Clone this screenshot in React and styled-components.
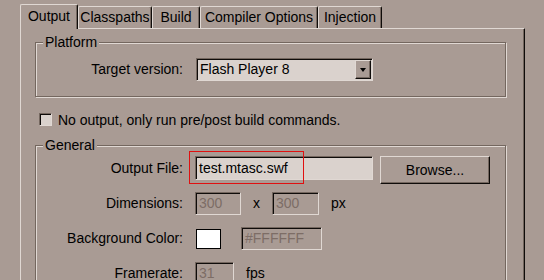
import React from 'react';
import styled, { createGlobalStyle } from 'styled-components';

const C = {
  face: '#A99B94',
  field: '#DAD2CD',
  hi: '#E0D8D3',
  shadow: '#74675F',
  dark: '#0F0C0A',
  dis: '#7D6D66',
};

const Global = createGlobalStyle`
  html, body { margin: 0; padding: 0; background: ${C.face}; }
  body {
    font-family: "Liberation Sans", Arial, sans-serif;
    font-size: 14px;
    color: #000;
    overflow: hidden;
  }
  * { box-sizing: border-box; }
`;

const Window = styled.div`
  position: relative;
  width: 544px;
  height: 280px;
  padding: 4px 0 0 20px;
  overflow: hidden;
`;

const TabStrip = styled.div`
  display: flex;
  align-items: flex-end;
  height: 24px;
`;

const Tab = styled.div`
  position: relative;
  z-index: ${(p) => (p.$active ? 2 : 0)};
  width: ${(p) => p.$w}px;
  height: ${(p) => (p.$active ? 25 : 22)}px;
  margin-bottom: ${(p) => (p.$active ? -1 : 0)}px;
  padding-top: ${(p) => (p.$active ? 4 : 3)}px;
  background: ${C.face};
  border-top: 1px solid ${C.hi};
  border-left: 1px solid ${C.hi};
  border-right: 1px solid ${C.dark};
  border-radius: 2px 2px 0 0;
  box-shadow: inset -1px 0 0 ${C.shadow};
  display: flex;
  justify-content: center;
  line-height: 15px;
  white-space: nowrap;
`;

const Panel = styled.div`
  width: 505px;
  height: 260px;
  border-top: 1px solid ${C.hi};
  border-left: 1px solid ${C.hi};
  border-right: 1px solid ${C.dark};
  box-shadow: inset -1px 0 0 ${C.shadow};
  padding: 0 18px 0 14px;
  display: flex;
  flex-direction: column;
`;

const Group = styled.fieldset`
  margin: ${(p) => p.$mt}px 0 0 0;
  padding: ${(p) => p.$pt}px 0 ${(p) => p.$pb}px 7px;
  border: 1px solid ${C.shadow};
  box-shadow: inset 1px 1px 0 ${C.hi}, 1px 1px 0 ${C.hi};
  min-width: 0;
  display: flex;
  flex-direction: column;
`;

const Legend = styled.legend`
  padding: 0 2px;
  background: ${C.face};
  line-height: 14px;
`;

const Row = styled.div`
  display: flex;
  align-items: flex-start;
  gap: ${(p) => p.$gap || 12}px;
  margin-top: ${(p) => p.$mt || 0}px;
`;

const Label = styled.div`
  width: 140px;
  flex: none;
  text-align: right;
  line-height: ${(p) => p.$h}px;
  white-space: nowrap;
`;

const Unit = styled.div`
  line-height: ${(p) => p.$h}px;
  white-space: nowrap;
`;

const sunken = `
  border: 1px solid;
  border-color: ${C.shadow} ${C.hi} ${C.hi} ${C.shadow};
  box-shadow: inset 1px 1px 0 ${C.dark};
`;

const Field = styled.div`
  ${sunken}
  width: ${(p) => p.$w}px;
  height: ${(p) => p.$h}px;
  background: ${(p) => (p.$disabled ? C.face : C.field)};
  color: ${(p) => (p.$disabled ? C.dis : '#000')};
  padding: 0 0 0 3px;
  line-height: ${(p) => p.$h - 2}px;
  white-space: nowrap;
  overflow: hidden;
`;

const Combo = styled.div`
  ${sunken}
  width: 177px;
  height: 23px;
  background: ${C.field};
  display: flex;
  align-items: center;
  justify-content: space-between;
  padding: 1px 1px 1px 3px;
  line-height: 19px;
`;

const DropButton = styled.div`
  width: 16px;
  height: 19px;
  background: ${C.face};
  border: 1px solid;
  border-color: ${C.hi} ${C.dark} ${C.dark} ${C.hi};
  box-shadow: inset -1px -1px 0 ${C.shadow};
  display: flex;
  align-items: center;
  justify-content: center;
`;

const Arrow = styled.div`
  width: 0;
  height: 0;
  border-left: 3.5px solid transparent;
  border-right: 3.5px solid transparent;
  border-top: 4px solid #000;
  margin-right: 1px;
`;

const CheckRow = styled.div`
  display: flex;
  align-items: center;
  gap: 6px;
  margin: 16px 0 0 4px;
  height: 13px;
  white-space: nowrap;
`;

const CheckBox = styled.div`
  ${sunken}
  width: 13px;
  height: 13px;
  background: ${C.field};
  flex: none;
`;

const Button = styled.div`
  width: 110px;
  height: 28px;
  background: ${C.face};
  border: 1px solid;
  border-color: ${C.hi} ${C.dark} ${C.dark} ${C.hi};
  box-shadow: inset -1px -1px 0 ${C.shadow};
  display: flex;
  align-items: center;
  justify-content: center;
  margin-left: -5px;
`;

const Swatch = styled.div`
  width: 25px;
  height: 20px;
  margin: 2px 8px 0 1px;
  background: #fff;
  border: 1px solid #000;
`;

const Highlight = styled.div`
  position: absolute;
  left: 189px;
  top: 151px;
  width: 115px;
  height: 33px;
  border: 1px solid #E01010;
  pointer-events: none;
`;

const tabs = [
  { label: 'Output', w: 58, active: true },
  { label: 'Classpaths', w: 74 },
  { label: 'Build', w: 48 },
  { label: 'Compiler Options', w: 118 },
  { label: 'Injection', w: 64 },
];

export default function App() {
  return (
    <>
      <Global />
      <Window>
        <TabStrip>
          {tabs.map((t) => (
            <Tab key={t.label} $w={t.w} $active={t.active}>
              {t.label}
            </Tab>
          ))}
        </TabStrip>
        <Panel>
          <Group $mt={6} $pt={9} $pb={15}>
            <Legend>Platform</Legend>
            <Row $gap={13}>
              <Label $h={23}>Target version:</Label>
              <Combo>
                <span>Flash Player 8</span>
                <DropButton>
                  <Arrow />
                </DropButton>
              </Combo>
            </Row>
          </Group>
          <CheckRow>
            <CheckBox />
            <span>No output, only run pre/post build commands.</span>
          </CheckRow>
          <Group $mt={12} $pt={4} $pb={20}>
            <Legend>General</Legend>
            <Row>
              <Label $h={24}>Output File:</Label>
              <Field $w={178} $h={24}>test.mtasc.swf</Field>
              <Button>Browse...</Button>
            </Row>
            <Row $mt={8}>
              <Label $h={23}>Dimensions:</Label>
              <Field $w={46} $h={23} $disabled>300</Field>
              <Unit $h={23}>x</Unit>
              <Field $w={47} $h={23} $disabled>300</Field>
              <Unit $h={23}>px</Unit>
            </Row>
            <Row $mt={12}>
              <Label $h={23}>Background Color:</Label>
              <Swatch />
              <Field $w={81} $h={23} $disabled>#FFFFFF</Field>
            </Row>
            <Row $mt={12}>
              <Label $h={23}>Framerate:</Label>
              <Field $w={39} $h={23} $disabled>31</Field>
              <Unit $h={23}>fps</Unit>
            </Row>
          </Group>
        </Panel>
        <Highlight />
      </Window>
    </>
  );
}
